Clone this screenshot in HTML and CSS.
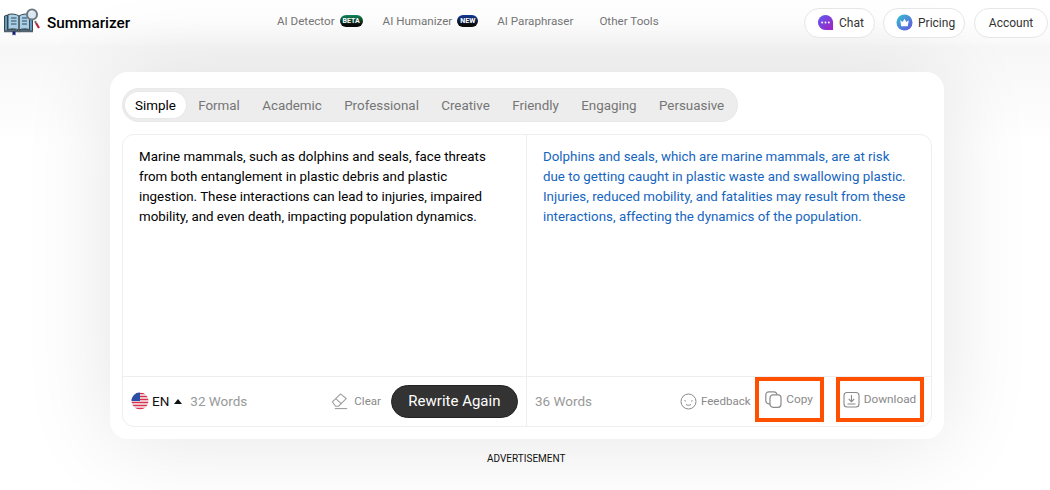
FILE: index.html
```html
<!DOCTYPE html>
<html lang="en">
<head>
<meta charset="utf-8">
<title>Summarizer</title>
<link rel="stylesheet" href="styles.css">
</head>
<body>
<header class="topbar">
  <div class="brand">
    <svg class="logo" width="36" height="36" viewBox="0 0 36 36">
      <path d="M0.500 26V11l3-1v15c4-1 8-1 11 1 3-2 7-2 11-1V10l3 1v15H16.500c-.5 1-1.500 1-2 0z" fill="#5f9cc0" stroke="#39444c" stroke-width="1"/>
      <path d="M15 11v14c-3-1.500-7-1.500-11-.5V9.500c4-1 8-.5 11 1.500zM15 11c3-2 7-2.500 10.500-1.500v15c-3.500-1-7.500-1-10.500.5z" fill="#a9cfe6" stroke="#3c4850" stroke-width="1"/>
      <path d="M7 13h5.500M7 16h5.500M7 19h5.500M18 13h5M18 16h5M18 19h5" stroke="#324a5c" stroke-width="1.200"/>
      <path d="M0 26.500h29" stroke="#55626c" stroke-width="1.500"/>
      <path d="M8.500 26.500h3v4l-1.500-1-1.500 1z" fill="#14206e"/>
      <circle cx="28" cy="9.500" r="5" fill="#d9e8f2" stroke="#6d777e" stroke-width="2"/>
      <path d="M26 7.500a3 3 0 0 1 2.500-1.500" fill="none" stroke="#fff" stroke-width="1"/>
      <path d="M31 16l1 2" stroke="#6d777e" stroke-width="2"/>
      <path d="M32 18l3 5" stroke="#b3283f" stroke-width="2.200"/>
    </svg>
    <span class="brand-name">Summarizer</span>
  </div>
  <nav class="nav">
    <span class="nav-item nav-detector">AI Detector<span class="pill pill-beta">BETA</span></span>
    <span class="nav-item nav-humanizer">AI Humanizer<span class="pill pill-new">NEW</span></span>
    <span class="nav-item nav-para">AI Paraphraser</span>
    <span class="nav-item">Other Tools</span>
  </nav>
  <div class="actions">
    <span class="action action-chat">
      <svg width="17" height="17" viewBox="0 0 18 18"><defs><linearGradient id="chatg" x1="0" y1="0" x2="1" y2="1"><stop offset="0" stop-color="#5b5ef0"/><stop offset="1" stop-color="#a51fc0"/></linearGradient></defs><path d="M9 1a8 8 0 0 1 8 8v8H9A8 8 0 0 1 9 1z" fill="url(#chatg)"/><circle cx="5.500" cy="9" r="1" fill="#fff"/><circle cx="9" cy="9" r="1" fill="#fff"/><circle cx="12.500" cy="9" r="1" fill="#fff"/></svg>
      Chat
    </span>
    <span class="action action-pricing">
      <svg width="17" height="17" viewBox="0 0 18 18"><defs><linearGradient id="prg" x1="0" y1="0" x2="1" y2="1"><stop offset="0" stop-color="#2fc4cf"/><stop offset="1" stop-color="#6a4fe0"/></linearGradient></defs><circle cx="9" cy="9" r="8.500" fill="url(#prg)"/><path d="M4.500 6.500l2.500 2L9 5l2 3.500 2.500-2-1 6.500h-7z" fill="#fff"/></svg>
      Pricing
    </span>
    <span class="action action-account">Account</span>
  </div>
</header>

<main class="page">
  <section class="card">
    <div class="tabs">
      <span class="tab tab-active">Simple</span>
      <span class="tab">Formal</span>
      <span class="tab">Academic</span>
      <span class="tab">Professional</span>
      <span class="tab">Creative</span>
      <span class="tab">Friendly</span>
      <span class="tab">Engaging</span>
      <span class="tab">Persuasive</span>
    </div>
    <div class="panel">
      <div class="pane">
        <p class="text">Marine mammals, such as dolphins and seals, face threats from both entanglement in plastic debris and plastic ingestion. These interactions can lead to injuries, impaired mobility, and even death, impacting population dynamics.</p>
        <div class="foot foot-left">
          <svg class="flag" width="18" height="18" viewBox="0 0 18 18"><defs><clipPath id="fc"><circle cx="9" cy="9" r="8.500"/></clipPath></defs><g clip-path="url(#fc)"><rect width="18" height="18" fill="#f4f0f0"/><path d="M0 1.500h18M0 4.500h18M0 7.500h18M0 10.500h18M0 13.500h18M0 16.500h18" stroke="#d9304f" stroke-width="1.500"/><rect width="9" height="9" fill="#2a4fa8"/></g></svg>
          <span class="lang">EN</span>
          <span class="caret"></span>
          <span class="count">32 Words</span>
          <span class="tool tool-clear">
            <svg width="19" height="18" viewBox="0 0 20 18" fill="none" stroke="#9a9a9a" stroke-width="1.100"><path d="M1.500 10L10 1.500l6 5-8 8H5z"/><path d="M5 6.500l6 5.500"/><path d="M4 17h13"/></svg>
            Clear
          </span>
          <span class="rewrite">Rewrite Again</span>
        </div>
      </div>
      <div class="pane pane-right">
        <p class="text text-blue">Dolphins and seals, which are marine mammals, are at risk due to getting caught in plastic waste and swallowing plastic. Injuries, reduced mobility, and fatalities may result from these interactions, affecting the dynamics of the population.</p>
        <div class="foot foot-right">
          <span class="count">36 Words</span>
          <span class="tool tool-feedback">
            <svg width="17" height="17" viewBox="0 0 17 17" fill="none" stroke="#8a8a8a" stroke-width="1"><circle cx="8.500" cy="8.500" r="7.500"/><path d="M4.500 7.500l1.500.8M12.500 7.500l-1.500.8M6 11.500c1.500 1 3.500 1 5 0"/></svg>
            Feedback
          </span>
          <span class="tool boxed box-copy">
            <svg width="17" height="17" viewBox="0 0 17 17" fill="none" stroke="#8a8a8a" stroke-width="1.200"><rect x="0.800" y="0.800" width="11" height="12" rx="3"/><rect x="5" y="3.800" width="11" height="12.500" rx="3" fill="#fff"/></svg>
            Copy
          </span>
          <span class="tool boxed box-download">
            <svg width="17" height="17" viewBox="0 0 17 17" fill="none" stroke="#8a8a8a" stroke-width="1.100"><rect x="1" y="1.500" width="15" height="14.500" rx="3"/><path d="M8.500 4v6.500M5.800 8l2.700 2.700L11.200 8M4.500 13h8"/></svg>
            Download
          </span>
        </div>
      </div>
    </div>
  </section>
  <div class="ad">ADVERTISEMENT</div>
</main>
</body>
</html>
```

FILE: styles.css
```css
* { box-sizing: border-box; }
html, body { margin: 0; padding: 0; }
body {
  width: 1050px;
  height: 490px;
  overflow: hidden;
  font-family: Roboto, "Liberation Sans", sans-serif;
  background: #fff;
  color: #000;
}
.topbar {
  height: 45px;
  display: flex;
  align-items: center;
  background: linear-gradient(180deg, #fff 0%, #fff 40%, #f9f9f9 100%);
}
.brand { display: flex; align-items: center; width: 277px; padding-left: 4px; }
.logo { display: block; flex: none; }
.brand-name { font-size: 15.300px; font-weight: 500; margin-left: 7px; }
.nav { display: flex; align-items: center; font-size: 11.600px; color: #757575; height: 100%; padding-bottom: 4px; }
.nav-item { display: flex; align-items: center; }
.nav-detector { margin-right: 20px; }
.nav-humanizer { margin-right: 19px; }
.nav-para { margin-right: 26px; }
.pill {
  margin-left: 5px;
  height: 12px;
  border-radius: 6px;
  font-size: 7px;
  font-weight: 700;
  line-height: 12px;
  color: #fff;
  text-align: center;
}
.pill-beta { width: 23px; background: linear-gradient(180deg, #118a5a, #0a0a0a 80%); }
.pill-new { width: 21px; background: linear-gradient(180deg, #123a9a, #0a0a0a 80%); }
.actions { display: flex; align-items: center; margin-left: auto; height: 30px; margin-right: 2px; }
.action {
  height: 30px;
  border: 1px solid #e6e6e6;
  border-radius: 15px;
  display: flex;
  align-items: center;
  gap: 5px;
  font-size: 12px;
  color: #333;
  background: #fff;
}
.action-chat { width: 71px; padding-left: 12px; }
.action-pricing { width: 82px; padding-left: 12px; margin-left: 8px; }
.action-account { width: 74px; justify-content: center; margin-left: 9px; }
.page {
  height: 445px;
  background: linear-gradient(180deg, #f7f7f7 0, #fff 100px);
  padding: 27px 0 0 110px;
}
.card {
  width: 834px;
  height: 367px;
  background: #fff;
  border-radius: 18px;
  padding: 16px 12px 12px;
  display: flex;
  flex-direction: column;
  box-shadow: 0 0 90px rgba(0, 0, 0, .11);
}
.tabs {
  align-self: flex-start;
  height: 34px;
  width: 616px;
  background: #ededed;
  border-radius: 17px;
  display: flex;
  align-items: center;
  padding: 0 3px;
  font-size: 13.400px;
  color: #757575;
  box-shadow: inset 0 0 2px rgba(0, 0, 0, .07);
}
.tab { padding: 0 10px; margin-right: 2.300px; }
.tab-active {
  background: #fff;
  color: #000;
  height: 26px;
  line-height: 27px;
  border-radius: 13px;
  box-shadow: 0 0 2px rgba(0, 0, 0, .08);
}
.panel {
  margin-top: 12px;
  flex: 1;
  border: 1px solid #eeeeee;
  border-radius: 12px;
  display: grid;
  grid-template-columns: 403px 1fr;
  min-height: 0;
  background: #fff;
}
.pane { display: flex; flex-direction: column; min-width: 0; }
.pane-right { border-left: 1px solid #eeeeee; }
.text {
  flex: 1;
  margin: 0;
  padding: 12px 21px 12px 16px;
  font-size: 13.330px;
  line-height: 20px;
}
.text-blue { color: #1565c0; }
.foot {
  height: 50px;
  border-top: 1px solid #eeeeee;
  display: flex;
  align-items: center;
  font-size: 11.500px;
  color: #8a8a8a;
  padding-bottom: 1px;
}
.foot-left { padding-left: 8px; }
.foot-right { padding-left: 8px; }
.flag { display: block; flex: none; }
.lang { font-size: 13.500px; color: #111; margin-left: 3px; }
.caret {
  margin-left: 5px;
  width: 0;
  height: 0;
  border-left: 4.500px solid transparent;
  border-right: 4.500px solid transparent;
  border-bottom: 5px solid #111;
}
.count { font-size: 13.500px; color: #999; margin-left: 8px; }
.foot-right .count { margin-left: 0; }
.tool { display: flex; align-items: center; gap: 4px; }
.tool-clear { margin-left: 84px; }
.rewrite {
  margin-left: 10px;
  width: 127px;
  height: 33px;
  border-radius: 17px;
  background: #333;
  border: 1px solid #222;
  color: #fff;
  font-size: 15px;
  display: flex;
  align-items: center;
  justify-content: center;
}
.tool-feedback { margin-left: 88px; }
.boxed {
  border: 4px solid #ff5000;
  height: 45px;
  justify-content: center;
  margin-bottom: 4px;
  font-size: 11.800px;
}
.box-copy { margin-left: 4px; width: 69px; }
.box-download { margin-left: 12px; width: 88px; }
.ad {
  margin: 14px 0 0 377px;
  font-size: 10px;
  line-height: 12px;
  color: #111;
}
```
